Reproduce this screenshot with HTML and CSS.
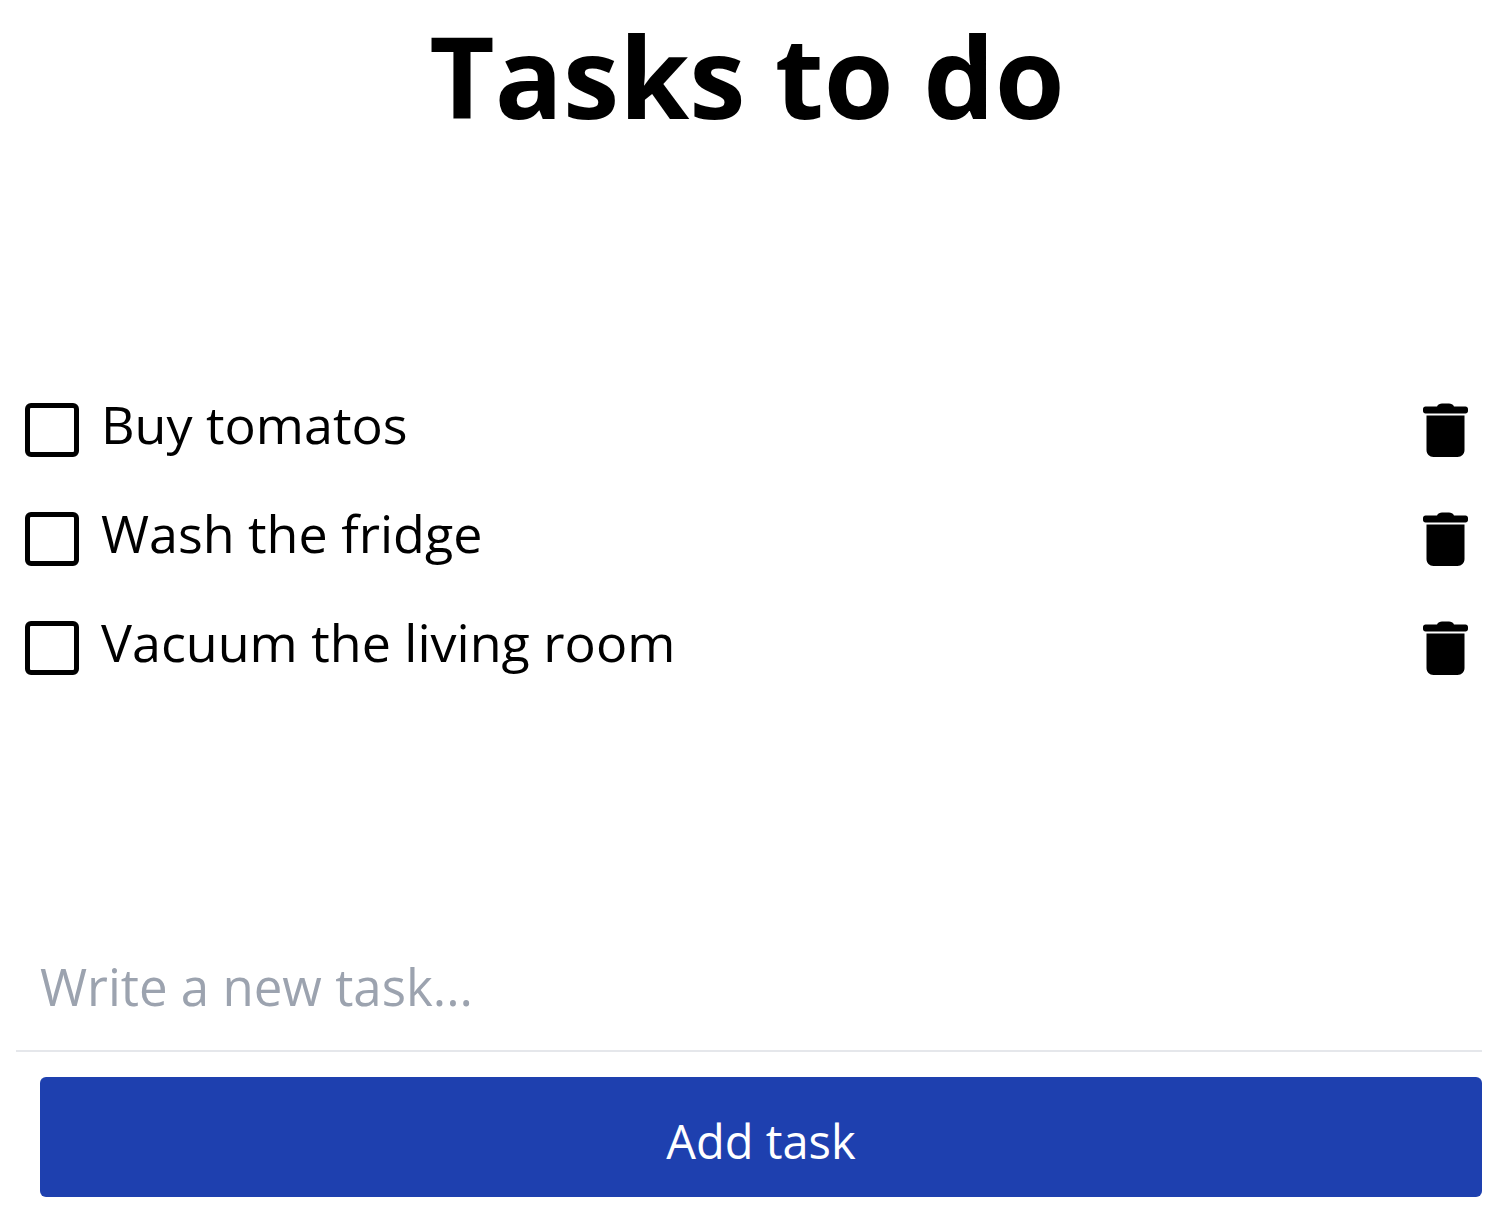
FILE: index.html
```html
<!DOCTYPE html>
<html lang="en">
<head>
<meta charset="utf-8">
<title>Tasks to do</title>
<link rel="stylesheet" href="styles.css">
</head>
<body>
<main class="app">
  <h1 class="title">Tasks to do</h1>
  <ul class="tasks">
    <li class="task">
      <span class="check"></span>
      <span class="label">Buy tomatos</span>
      <svg class="trash" viewBox="0 0 45 54"><path d="M14 3.500C15 1.300 17 .5 19 .5h7c2 0 4 .8 5 3h11.500c1.400 0 2.500 1.100 2.500 2.500v2c0 1.400-1.100 2.500-2.500 2.500H2.500C1.100 10.500 0 9.400 0 8V6c0-1.400 1.100-2.500 2.500-2.500zM3.500 12.500h38V47c0 4-3 7-7 7h-24c-4 0-7-3-7-7z"/></svg>
    </li>
    <li class="task">
      <span class="check"></span>
      <span class="label">Wash the fridge</span>
      <svg class="trash" viewBox="0 0 45 54"><path d="M14 3.500C15 1.300 17 .5 19 .5h7c2 0 4 .8 5 3h11.500c1.400 0 2.500 1.100 2.500 2.500v2c0 1.400-1.100 2.500-2.500 2.500H2.500C1.100 10.500 0 9.400 0 8V6c0-1.400 1.100-2.500 2.500-2.500zM3.500 12.500h38V47c0 4-3 7-7 7h-24c-4 0-7-3-7-7z"/></svg>
    </li>
    <li class="task">
      <span class="check"></span>
      <span class="label">Vacuum the living room</span>
      <svg class="trash" viewBox="0 0 45 54"><path d="M14 3.500C15 1.300 17 .5 19 .5h7c2 0 4 .8 5 3h11.500c1.400 0 2.500 1.100 2.500 2.500v2c0 1.400-1.100 2.500-2.500 2.500H2.500C1.100 10.500 0 9.400 0 8V6c0-1.400 1.100-2.500 2.500-2.500zM3.500 12.500h38V47c0 4-3 7-7 7h-24c-4 0-7-3-7-7z"/></svg>
    </li>
  </ul>
  <form class="new-task">
    <input class="field" type="text" placeholder="Write a new task...">
    <button class="add" type="button">Add task</button>
  </form>
</main>
</body>
</html>
```

FILE: styles.css
```css
* { box-sizing: border-box; }
html, body { margin: 0; padding: 0; background: #fff; }
body { font-family: "Open Sans", "Noto Sans", sans-serif; color: #000; }
.app { width: 1500px; height: 1212px; display: flex; flex-direction: column; padding: 0 18px 15px 16px; }
.title { margin: 0; padding-right: 4px; height: 150px; line-height: 150px; font-size: 113px; font-weight: 700; text-align: center; }
.tasks { list-style: none; margin: 253px 0 0; padding: 0 0 0 9px; display: flex; flex-direction: column; gap: 55px; }
.task { display: flex; align-items: center; height: 54px; padding-right: 14px; }
.check { width: 54px; height: 54px; border: 5px solid #000; border-radius: 6px; flex: none; }
.label { flex: 1; margin-left: 22px; padding-bottom: 12px; font-size: 52px; line-height: 54px; }
.trash { width: 45px; height: 54px; fill: #000; flex: none; }
.new-task { margin-top: auto; display: flex; flex-direction: column; align-items: stretch; }
.field { height: 105px; border: 0; border-bottom: 2px solid #e5e7eb; padding: 0 24px 26px; font: inherit; font-size: 51px; outline: none; background: transparent; }
.field::placeholder { color: #9ca3af; opacity: 1; }
.add { margin: 25px 0 0 24px; height: 120px; border: 0; border-radius: 6px; padding: 8px 0 0; background: #1e40af; color: #fff; font: inherit; font-size: 47px; }
```
